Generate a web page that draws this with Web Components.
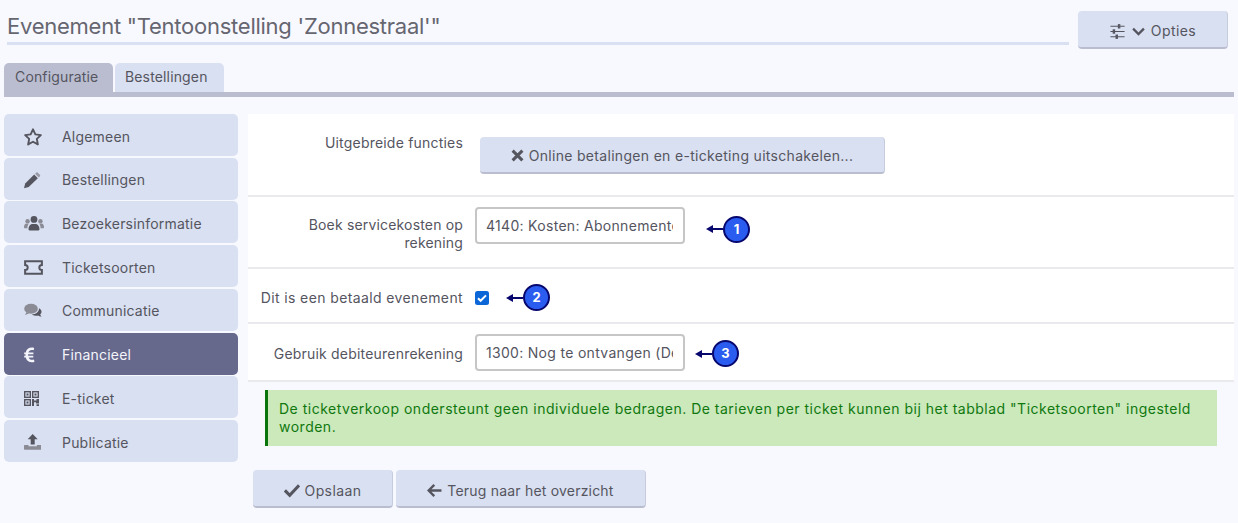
<!DOCTYPE html>
<html lang="nl"><head><meta charset="utf-8"><title>Evenement</title>
<style>
html,body{margin:0;padding:0;background:#f8f9ff;}
body{width:1238px;height:523px;overflow:hidden;font-family:"Inter","Noto Sans",sans-serif;font-size:14px;color:#55555f;}
</style></head><body>
<app-page></app-page>
<script>
const ICONS={
 star:'<path fill="none" stroke="currentColor" stroke-width="1.7" stroke-linejoin="round" d="M9 2.200l2.100 4.500 4.900.6-3.600 3.400.9 4.900L9 13.200l-4.300 2.400.9-4.900L2 7.300l4.900-.6z"/>',
 pencil:'<path fill="currentColor" d="M11.600 3.400l3.400 3.400-8.600 8.400-4.400 1.200 1.100-4.500z"/><path fill="#9a9aa4" d="M12.400 2.600l1.100-1c.5-.4 1.100-.4 1.500 0l2 2c.4.4.4 1 0 1.400l-1.100 1.100z"/>',
 users:'<circle cx="9.500" cy="5.200" r="3.200" fill="currentColor"/><path fill="currentColor" d="M4.300 14.600c0-3 1.800-5 3.600-5h3.200c1.800 0 3.600 2 3.600 5 0 .6-.4 1-1 1H5.300c-.6 0-1-.4-1-1z"/><circle cx="3.400" cy="6.800" r="2.100" fill="#8b8b95"/><circle cx="15.600" cy="6.800" r="2.100" fill="#8b8b95"/><path fill="#8b8b95" d="M0 12.500c0-2 1-3.500 2.400-3.500h2.300c-.9 1-1.400 2.400-1.500 4.600H1c-.6 0-1-.5-1-1.100zM19 12.500c0-2-1-3.500-2.400-3.500h-2.300c.9 1 1.400 2.400 1.500 4.600H18c.6 0 1-.5 1-1.100z"/>',
 ticket:'<path fill="none" stroke="currentColor" stroke-width="1.800" stroke-linejoin="miter" d="M2 4h15v3.200a2.300 2.300 0 0 0 0 4.600V15H2v-3.200a2.300 2.300 0 0 0 0-4.600z"/>',
 comments:'<ellipse cx="7.500" cy="6.800" rx="6.800" ry="5" fill="#8b8b95"/><path fill="#8b8b95" d="M3 10l-1.500 3 4-1.500z"/><path fill="currentColor" d="M15.500 6.200c1.600.8 2.500 2 2.500 3.500 0 1-.5 2-1.300 2.700.2.800.7 1.500 1.300 2-1.300 0-2.500-.4-3.300-1-.8.300-1.800.4-2.800.3-1.500-.1-2.800-.6-3.700-1.400 3.900-.1 7.600-2.300 7.300-6.100z"/>',
 euro:'<path fill="currentColor" d="M13.200 2.400c-.8-.2-1.600-.3-2.300-.3-3.200 0-5.500 1.900-6.200 4.900H3.200v1.700h1.300v1.500H3.200v1.700h1.500c.7 3 3 4.900 6.300 4.900.8 0 1.600-.1 2.400-.3l-.4-2.400c-.6.100-1.200.2-1.900.2-1.700 0-2.900-.9-3.400-2.400h4.600v-1.700H7.100V8.700h5.300V7H7.400c.5-1.500 1.700-2.400 3.400-2.400.6 0 1.300.1 1.900.2z"/>',
 qr:'<g fill="none" stroke="currentColor" stroke-width="1.400"><rect x="2.700" y="2.700" width="5.600" height="5.600"/><rect x="10.700" y="2.700" width="5.600" height="5.600"/><rect x="2.700" y="10.700" width="5.600" height="5.600"/></g><path fill="currentColor" d="M4.500 4.500h2v2h-2zM12.500 4.500h2v2h-2zM4.500 12.500h2v2h-2zM10 10h2v1.500h2.500V10H17v4.500h-3v-1.200h-2V17h-2zM14.500 15.300H17V17h-2.500z"/>',
 upload:'<path fill="currentColor" d="M9.500 1.500l5 5.200h-3v5.300h-4V6.700h-3z"/><path fill="#8b8b95" d="M1.500 12.500h3.800v1.300h8.400v-1.300h3.800c.4 0 .7.300.7.700v3.300c0 .4-.3.700-.7.700H1.500c-.4 0-.7-.3-.7-.7v-3.300c0-.4.300-.7.700-.7z"/>',
 sliders:'<g stroke="currentColor" stroke-width="1.200" fill="currentColor"><path d="M1 3.500h15M1 9h15M1 14.500h15" fill="none"/><rect x="9.500" y="1.800" width="1.400" height="3.400"/><rect x="4" y="7.300" width="1.400" height="3.400"/><rect x="7" y="12.800" width="1.400" height="3.400"/></g>',
 chevron:'<path fill="none" stroke="currentColor" stroke-width="2.800" d="M2.500 5.500l6.500 6.500 6.500-6.500"/>',
 times:'<path fill="none" stroke="currentColor" stroke-width="2.800" d="M3.500 3.500l9 9M12.500 3.500l-9 9"/>',
 check:'<path fill="none" stroke="currentColor" stroke-width="2.700" d="M1.800 8.500l4.200 4.200 8.200-8.700"/>',
 arrow:'<path fill="none" stroke="currentColor" stroke-width="2.200" d="M7.800 2.800L2.500 8l5.300 5.200M3 8h11.500"/>'
};
class UiIcon extends HTMLElement{
 connectedCallback(){
  const s=this.getAttribute('size')||18,v=this.getAttribute('vb')||'0 0 19 19';
  this.shadowRoot||this.attachShadow({mode:'open'});
  this.shadowRoot.innerHTML=`<style>:host{display:inline-flex;flex:none;align-items:center;justify-content:center}svg{display:block}</style><svg width="${s}" height="${s}" viewBox="${v}" aria-hidden="true">${ICONS[this.getAttribute('name')]||''}</svg>`;
 }
}
customElements.define('ui-icon',UiIcon);

class UiButton extends HTMLElement{
 constructor(){super();this.attachShadow({mode:'open'}).innerHTML=`<style>
 :host{display:inline-flex;align-items:center;justify-content:center;box-sizing:border-box;height:38px;gap:5px;padding-top:4px;background:#d9e0f1;border-radius:4px;border-bottom:2px solid #babdd0;border-right:1px solid #c6cbdd;color:#55555f;font:14px/20px "Inter","Noto Sans",sans-serif;letter-spacing:.42px}
 </style><slot></slot>`;}
}
customElements.define('ui-button',UiButton);

class NavItem extends HTMLElement{
 constructor(){super();this.attachShadow({mode:'open'}).innerHTML=`<style>
 :host{display:flex;align-items:center;box-sizing:border-box;height:42px;padding:3px 0 0 20px;background:#d9e0f1;border-radius:5px;color:#55555f;font:14px/20px "Inter","Noto Sans",sans-serif;letter-spacing:.2px}
 :host([active]){background:#66688c;color:#f4f5fb}
 .i{width:38px;display:flex;justify-content:flex-start}
 </style><span class="i"><slot name="icon"></slot></span><slot></slot>`;}
}
customElements.define('nav-item',NavItem);

class SideNav extends HTMLElement{
 constructor(){super();this.attachShadow({mode:'open'}).innerHTML=`<style>:host{display:flex;flex-direction:column;gap:1.720px;width:234px;flex:none}</style><slot></slot>`;}
}
customElements.define('side-nav',SideNav);

class FormRow extends HTMLElement{
 constructor(){super();this.attachShadow({mode:'open'}).innerHTML=`<style>
 :host{display:grid;grid-template-columns:215px 1fr;column-gap:12px;box-sizing:border-box;border-bottom:2px solid #e9e9ee;align-items:center}
 .l{text-align:right;line-height:18px;letter-spacing:.2px;color:#55555f}
 .c{display:flex;align-items:center}
 </style><div class="l"><slot name="label"></slot></div><div class="c"><slot></slot></div>`;}
}
customElements.define('form-row',FormRow);

class TextBox extends HTMLElement{
 constructor(){super();this.attachShadow({mode:'open'}).innerHTML=`<style>
 :host{display:block;box-sizing:border-box;width:210px;height:37px;padding:0 10px 0 9px;background:#fff;border:2px solid #c6c6c6;border-radius:4px;font:14px/33px "Inter","Noto Sans",sans-serif;letter-spacing:.3px;color:#55555f;overflow:hidden;white-space:nowrap}
 .t{display:block;overflow:hidden}
 </style><span class="t"><slot></slot></span>`;}
}
customElements.define('text-box',TextBox);

class CheckBox extends HTMLElement{
 constructor(){super();this.attachShadow({mode:'open'}).innerHTML=`<style>
 :host{display:flex;align-items:center;justify-content:center;width:14px;height:14px;background:#0b66d8;border-radius:2.500px;color:#fff}
 </style><svg width="12" height="12" viewBox="0 0 12 12"><path d="M2 6.300l2.600 2.500L10 3.400" fill="none" stroke="#fff" stroke-width="2"/></svg>`;}
}
customElements.define('check-box',CheckBox);

class CalloutBadge extends HTMLElement{
 constructor(){super();this.attachShadow({mode:'open'}).innerHTML=`<style>
 :host{display:inline-flex;align-items:center;flex:none}
 svg{display:block}
 .b{box-sizing:border-box;width:27px;height:27px;border-radius:50%;background:#2a5cf0;border:2px solid #07076e;color:#fff;display:flex;align-items:center;justify-content:center;font:700 13px/1 "Inter","Noto Sans",sans-serif}
 </style><svg width="17" height="10" viewBox="0 0 17 10"><path d="M0 5l7-4v3h10v2H7v3z" fill="#07076e"/></svg><span class="b"><slot></slot></span>`;}
}
customElements.define('callout-badge',CalloutBadge);

class AlertBox extends HTMLElement{
 constructor(){super();this.attachShadow({mode:'open'}).innerHTML=`<style>
 :host{display:block;box-sizing:border-box;width:952px;height:56px;margin-left:17px;padding:10px 12px 0 11px;background:#cbe9bb;border-left:3px solid #0a750a;color:#10780f;line-height:18px;letter-spacing:.5px}
 </style><slot></slot>`;}
}
customElements.define('alert-box',AlertBox);

class TabBar extends HTMLElement{
 constructor(){super();this.attachShadow({mode:'open'}).innerHTML=`<style>
 :host{display:flex;gap:2px;box-sizing:border-box;margin:0 4px;height:34px;border-bottom:5px solid #babdd0}
 </style><slot></slot>`;}
}
customElements.define('tab-bar',TabBar);

class TabItem extends HTMLElement{
 constructor(){super();this.attachShadow({mode:'open'}).innerHTML=`<style>
 :host{display:flex;align-items:center;box-sizing:border-box;width:109px;height:29px;padding:0 0 2px 10px;background:#d9e0f1;border-radius:5px 5px 0 0;color:#55555f;font-size:14px;letter-spacing:.15px}
 :host([active]){background:#babdd0;padding-left:11px}
 </style><slot></slot>`;}
}
customElements.define('tab-item',TabItem);

class AppPage extends HTMLElement{
 constructor(){super();this.attachShadow({mode:'open'}).innerHTML=`<style>
 :host{display:block;width:1238px;height:523px;box-sizing:border-box;padding-top:11px}
 .head{display:flex;align-items:flex-start;padding:0 10px 0 7px;gap:9px;height:52px}
 h1{flex:1;margin:0;height:31px;border-bottom:3px solid #d9e0f1;font:400 22px/31px "Inter","Noto Sans",sans-serif;letter-spacing:-.25px;color:#666670}
 .opt{width:150px}
 .body{display:flex;gap:10px;margin:17px 4px 0}
 .main{flex:1;min-width:0}
 .panel{background:#fff;display:flex;flex-direction:column}
 .r1{height:83px;align-items:start;padding-top:23px}
 .r2{height:72px;align-items:start;padding-top:10px}
 .r3{height:55px;padding-top:4px}.r4{height:58px}
 .acts{display:flex;gap:3px;margin:24px 0 0 5px}
 .b1{width:140px;padding-top:5px}.b2{width:250px;padding-top:5px;letter-spacing:.2px}
 .wide{width:405px;height:37px;margin-left:5px;padding-top:2px;letter-spacing:.31px}
 .lb{display:block}
 .l1{margin-top:-3px}.l2{padding-top:9px;letter-spacing:.17px}.l3{letter-spacing:.38px}.l4{padding-top:4px}
 .cb1{margin:7px 0 0 21px}
 .cb2{margin-left:17px}
 .cb3{margin:3px 0 0 10px}
 .gap{height:8px}
 </style>
 <div class="head"><h1>Evenement "Tentoonstelling 'Zonnestraal'"</h1>
  <ui-button class="opt"><ui-icon name="sliders" size="17" vb="0 0 17 18"></ui-icon><ui-icon name="chevron" size="15" vb="0 0 18 18"></ui-icon>Opties</ui-button></div>
 <tab-bar><tab-item active>Configuratie</tab-item><tab-item>Bestellingen</tab-item></tab-bar>
 <div class="body">
  <side-nav>
   <nav-item><ui-icon slot="icon" name="star" size="18" vb="1 1 16 16"></ui-icon>Algemeen</nav-item>
   <nav-item><ui-icon slot="icon" name="pencil" size="17" vb="2 1 16 16"></ui-icon>Bestellingen</nav-item>
   <nav-item><ui-icon slot="icon" name="users" size="20" vb="0 0 19 19"></ui-icon>Bezoekersinformatie</nav-item>
   <nav-item><ui-icon slot="icon" name="ticket" size="19" vb="1 1 17 17"></ui-icon>Ticketsoorten</nav-item>
   <nav-item><ui-icon slot="icon" name="comments" size="18" vb="0.5 0 18 18"></ui-icon>Communicatie</nav-item>
   <nav-item active><ui-icon slot="icon" name="euro" size="16" vb="3 1.5 16 16"></ui-icon>Financieel</nav-item>
   <nav-item><ui-icon slot="icon" name="qr" size="15" vb="2 2 15 15"></ui-icon>E-ticket</nav-item>
   <nav-item><ui-icon slot="icon" name="upload" size="17" vb="0.8 1.5 17 17"></ui-icon>Publicatie</nav-item>
  </side-nav>
  <div class="main">
   <div class="panel">
    <form-row class="r1"><span slot="label" class="lb l1">Uitgebreide functies</span>
      <ui-button class="wide"><ui-icon name="times" size="13" vb="2 2 12 12"></ui-icon>Online betalingen en e-ticketing uitschakelen...</ui-button></form-row>
    <form-row class="r2"><span slot="label" class="lb l2">Boek servicekosten op rekening</span><text-box>4140: Kosten: Abonnementen</text-box><callout-badge class="cb1">1</callout-badge></form-row>
    <form-row class="r3"><span slot="label" class="lb l3">Dit is een betaald evenement</span><check-box></check-box><callout-badge class="cb2">2</callout-badge></form-row>
    <form-row class="r4"><span slot="label" class="lb l4">Gebruik debiteurenrekening</span><text-box>1300: Nog te ontvangen (Debiteuren)</text-box><callout-badge class="cb3">3</callout-badge></form-row>
   </div>
   <div class="gap"></div>
   <alert-box>De ticketverkoop ondersteunt geen individuele bedragen. De tarieven per ticket kunnen bij het tabblad "Ticketsoorten" ingesteld worden.</alert-box>
   <div class="acts"><ui-button class="b1"><ui-icon name="check" size="16" vb="1 2 14 14"></ui-icon>Opslaan</ui-button><ui-button class="b2"><ui-icon name="arrow" size="15" vb="1 1 14 14"></ui-icon>Terug naar het overzicht</ui-button></div>
  </div>
 </div>`;}
}
customElements.define('app-page',AppPage);
</script>
</body></html>
